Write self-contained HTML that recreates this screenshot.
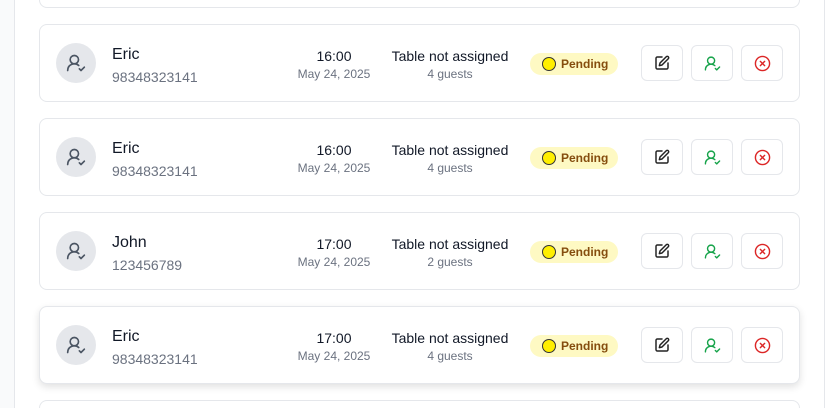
<!DOCTYPE html>
<html style="width:825px;height:408px;overflow:hidden"><head><meta charset="utf-8"><style>
*{box-sizing:border-box;margin:0;padding:0}
body{width:825px;height:408px;overflow:hidden;background:#f9fafb;font-family:"Liberation Sans",Arial,sans-serif;position:relative}
.panel{position:absolute;left:14px;top:-10px;width:811px;height:418px;background:#fff;border-left:1px solid #e5e7eb;border-right:1px solid #e5e7eb}
.card{position:absolute;left:39px;width:761px;height:78px;background:#fff;border:1px solid #e5e7eb;border-radius:8px}
.card.sh{box-shadow:0 3px 8px rgba(0,0,0,.12)}
.av{position:absolute;left:16px;top:18px;width:40px;height:40px;border-radius:50%;background:#e5e7eb;display:flex;align-items:center;justify-content:center}
.name{position:absolute;left:72px;top:21px;font-size:16px;color:#111827}
.phone{position:absolute;left:72px;top:44px;font-size:14px;color:#6b7280}
.time{position:absolute;left:244px;width:100px;text-align:center;top:23px;font-size:14px;color:#111827}
.date{position:absolute;left:244px;width:100px;text-align:center;top:42px;font-size:12px;color:#6b7280}
.tbl{position:absolute;left:340px;width:140px;text-align:center;top:23px;font-size:14px;color:#111827}
.gst{position:absolute;left:340px;width:140px;text-align:center;top:42px;font-size:12px;color:#6b7280}
.badge{position:absolute;left:490px;top:28px;width:88px;height:22px;border-radius:11px;background:#fef9c3;color:#854d0e;font-size:12px;font-weight:bold;display:flex;align-items:center;padding-left:12px}
.dot{width:14px;height:14px;border-radius:50%;background:#ffef00;border:1px solid #333;margin-right:5px}
.btn{position:absolute;top:20px;width:42px;height:36px;border:1px solid #e5e7eb;border-radius:6px;background:#fff;display:flex;align-items:center;justify-content:center}
</style></head><body>
<div class="panel"></div>
<div class="card" style="top:-70px"></div>
<div class="card" style="top:400px;height:8px;border-bottom:none;border-radius:8px 8px 0 0"></div>
<script>
const rows=[[24,"Eric","98348323141","16:00","4 guests",0],[118,"Eric","98348323141","16:00","4 guests",0],[212,"John","123456789","17:00","2 guests",0],[306,"Eric","98348323141","17:00","4 guests",1]];
const user=(c,s)=>`<svg width="${s}" height="${s}" viewBox="0 0 24 24" fill="none" stroke="${c}" stroke-width="2" stroke-linecap="round" stroke-linejoin="round"><path d="M2 21a8 8 0 0 1 13.3-6"/><circle cx="10" cy="8" r="5"/><path d="m16 19 2 2 4-4"/></svg>`;
let h="";
for(const r of rows){h+=`<div class="card${r[5]?' sh':''}" style="top:${r[0]}px">
<div class="av">${user('#4b5563',20)}</div>
<div class="name">${r[1]}</div><div class="phone">${r[2]}</div>
<div class="time">${r[3]}</div><div class="date">May 24, 2025</div>
<div class="tbl">Table not assigned</div><div class="gst">${r[4]}</div>
<div class="badge"><span class="dot"></span>Pending</div>
<div class="btn" style="left:601px"><svg width="16" height="16" viewBox="0 0 24 24" fill="none" stroke="#222" stroke-width="2.2" stroke-linecap="round" stroke-linejoin="round"><path d="M12 3H5a2 2 0 0 0-2 2v14a2 2 0 0 0 2 2h14a2 2 0 0 0 2-2v-7"/><path d="M18.4 2.6a2.1 2.1 0 0 1 3 3L12 15l-4 1 1-4z"/></svg></div>
<div class="btn" style="left:651px">${user('#16a34a',17)}</div>
<div class="btn" style="left:701px"><svg width="17" height="17" viewBox="0 0 24 24" fill="none" stroke="#dc2626" stroke-width="2" stroke-linecap="round"><circle cx="12" cy="12" r="10"/><path d="m15 9-6 6M9 9l6 6"/></svg></div>
</div>`}
document.write(h);
</script>
</body></html>
